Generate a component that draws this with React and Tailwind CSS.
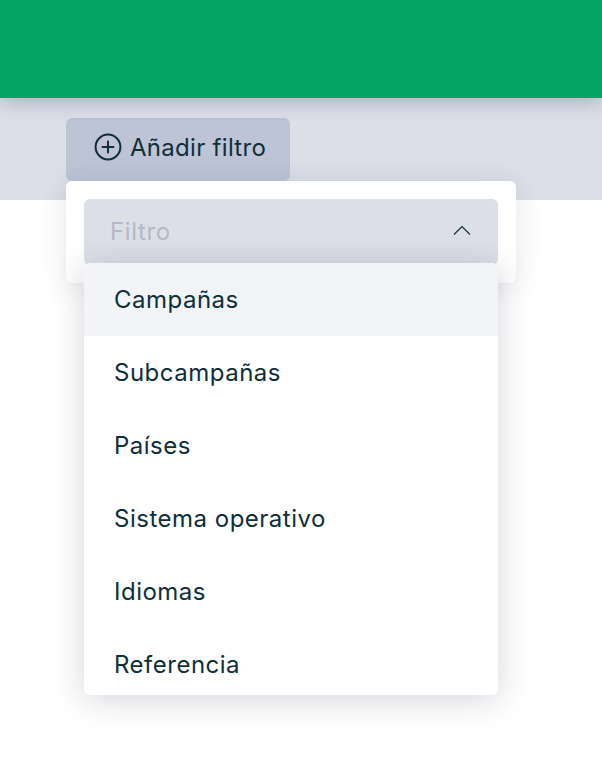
const options = ["Campañas", "Subcampañas", "Países", "Sistema operativo", "Idiomas", "Referencia"];

const App = () => {
    return (
        <div className="relative h-[770px] w-[602px] overflow-hidden bg-white font-['Inter',sans-serif] text-[#0d2f3a]">
            <div className="relative z-10 h-[98px] bg-[#03a564] shadow-[0_2px_20px_rgba(40,40,70,0.32)]" />
            <div className="h-[102px] bg-[#dcdfe8] pl-[66px] pt-[20px]">
                <button className="flex h-[63px] w-[224px] items-center gap-[8px] rounded-[6px] bg-[#bdc4d6] pb-[4px] pl-[28px] text-[24px]">
                    <svg width="28" height="28" viewBox="0 0 28 28" fill="none" stroke="#0d2f3a" strokeWidth="2" strokeLinecap="round" className="-translate-y-[1px]">
                        <circle cx="14" cy="14" r="12.4" />
                        <path d="M14 8.5v11M8.5 14h11" />
                    </svg>
                    <span className="tracking-[0.3px]">Añadir filtro</span>
                </button>
            </div>

            <div className="absolute left-[66px] top-[181px] h-[102px] w-[450px] rounded-[6px] bg-white p-[18px] shadow-[0_2px_28px_rgba(40,40,70,0.12)]">
                <div className="flex h-[66px] items-center justify-between rounded-[6px] bg-[#dcdfe8] pl-[26px] pr-[27px] text-[24px] tracking-[0.6px] text-[#b4b8c8]">
                    <span>Filtro</span>
                    <svg width="18" height="12" viewBox="0 0 18 12" fill="none" stroke="#0d2f3a" strokeWidth="1.2" className="-translate-y-[2px]">
                        <path d="M1 10.5 9 2.5l8 8" />
                    </svg>
                </div>
            </div>

            <ul className="absolute left-[84px] top-[263px] h-[432px] w-[414px] overflow-hidden rounded-[6px] bg-white text-[24px] tracking-[0.5px] shadow-[0_4px_32px_rgba(40,40,70,0.2)]">
                {options.map((option, i) => (
                    <li key={option} className={`flex h-[73px] items-center pl-[30px] ${i === 0 ? "bg-[#f3f4f8]" : ""}`}>
                        {option}
                    </li>
                ))}
            </ul>
        </div>
    );
};

export default App;
